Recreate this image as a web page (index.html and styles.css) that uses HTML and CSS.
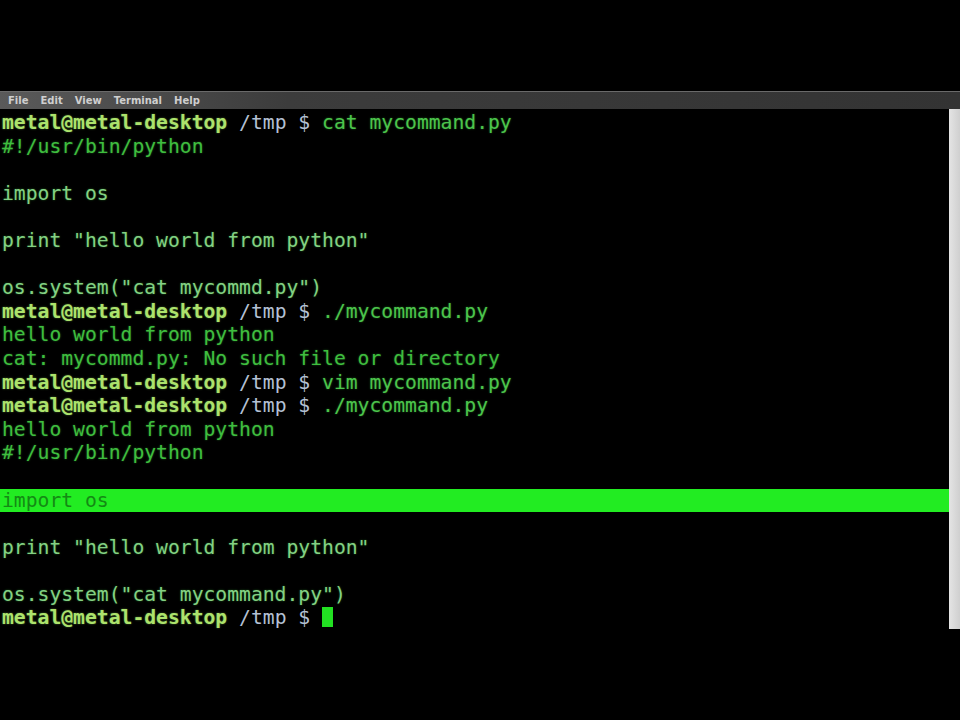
FILE: index.html
```html
<!DOCTYPE html>
<html lang="en">
<head>
    <meta charset="UTF-8">
    <meta name="viewport" content="width=device-width, initial-scale=1.0">
    <title>metal@metal-desktop: /tmp</title>
    <link rel="stylesheet" href="styles.css">
</head>
<body>
    <div class="window">
        <!-- Barra de menu do terminal -->
        <div class="menubar">
            <span class="menu-item">File</span>
            <span class="menu-item">Edit</span>
            <span class="menu-item">View</span>
            <span class="menu-item">Terminal</span>
            <span class="menu-item">Help</span>
        </div>

        <!-- Tela do terminal -->
        <div class="screen">
            <div class="output">
                <div class="line"><span class="user">metal@metal-desktop</span> <span class="path">/tmp $</span> <span class="cmd">cat mycommand.py</span></div>
                <div class="line">#!/usr/bin/python</div>
                <div class="line"></div>
                <div class="line pale">import os</div>
                <div class="line"></div>
                <div class="line pale">print "hello world from python"</div>
                <div class="line"></div>
                <div class="line pale">os.system("cat mycommd.py")</div>
                <div class="line"><span class="user">metal@metal-desktop</span> <span class="path">/tmp $</span> <span class="cmd">./mycommand.py</span></div>
                <div class="line">hello world from python</div>
                <div class="line">cat: mycommd.py: No such file or directory</div>
                <div class="line"><span class="user">metal@metal-desktop</span> <span class="path">/tmp $</span> <span class="cmd">vim mycommand.py</span></div>
                <div class="line"><span class="user">metal@metal-desktop</span> <span class="path">/tmp $</span> <span class="cmd">./mycommand.py</span></div>
                <div class="line">hello world from python</div>
                <div class="line">#!/usr/bin/python</div>
                <div class="line"></div>
                <div class="line selected">import os</div>
                <div class="line"></div>
                <div class="line pale">print "hello world from python"</div>
                <div class="line"></div>
                <div class="line pale">os.system("cat mycommand.py")</div>
                <div class="line"><span class="user">metal@metal-desktop</span> <span class="path">/tmp $</span> <span class="cursor"></span></div>
            </div>
            <div class="scrollbar"></div>
        </div>
    </div>
</body>
</html>
```

FILE: styles.css
```css
body {
    margin: 0;
    padding: 0;
    background: #000;
    width: 960px;
    height: 720px;
    overflow: hidden;
}

.window {
    padding-top: 91px;
}

.menubar {
    height: 18px;
    display: flex;
    align-items: center;
    gap: 12px;
    padding-left: 8px;
    background: linear-gradient(90deg, #5a5a5a, #3c3c3c 30%, #333 100%);
    border-top: 1px solid #6a6a6a;
    box-sizing: border-box;
}

.menu-item {
    font-family: 'DejaVu Sans', sans-serif;
    font-size: 10px;
    font-weight: bold;
    color: #cfcfcf;
}

.screen {
    display: flex;
    height: 520px;
}

.output {
    flex: 1;
    padding-top: 2px;
    font-family: 'DejaVu Sans Mono', monospace;
    font-size: 19.7px;
    line-height: 23.6px;
    color: #3fbd3f;
    text-shadow: 0 0 2px rgba(60, 200, 60, 0.5);
}

.line {
    height: 23.6px;
    padding-left: 2px;
    white-space: pre;
}

.pale {
    color: #84d084;
}

.user {
    color: #ace26c;
    font-weight: bold;
    text-shadow: 0 0 2px rgba(150, 220, 100, 0.5);
}

.path {
    color: #b4c0d4;
    text-shadow: none;
}

.cmd {
    color: #4cc44c;
}

.selected {
    background: #22ec22;
    color: #148a14;
    text-shadow: none;
}

.cursor {
    display: inline-block;
    width: 11px;
    height: 20px;
    vertical-align: -3px;
    background: #22e022;
}

.scrollbar {
    width: 11px;
    background: linear-gradient(90deg, #e4e4e4, #cfcfcf);
}
```
